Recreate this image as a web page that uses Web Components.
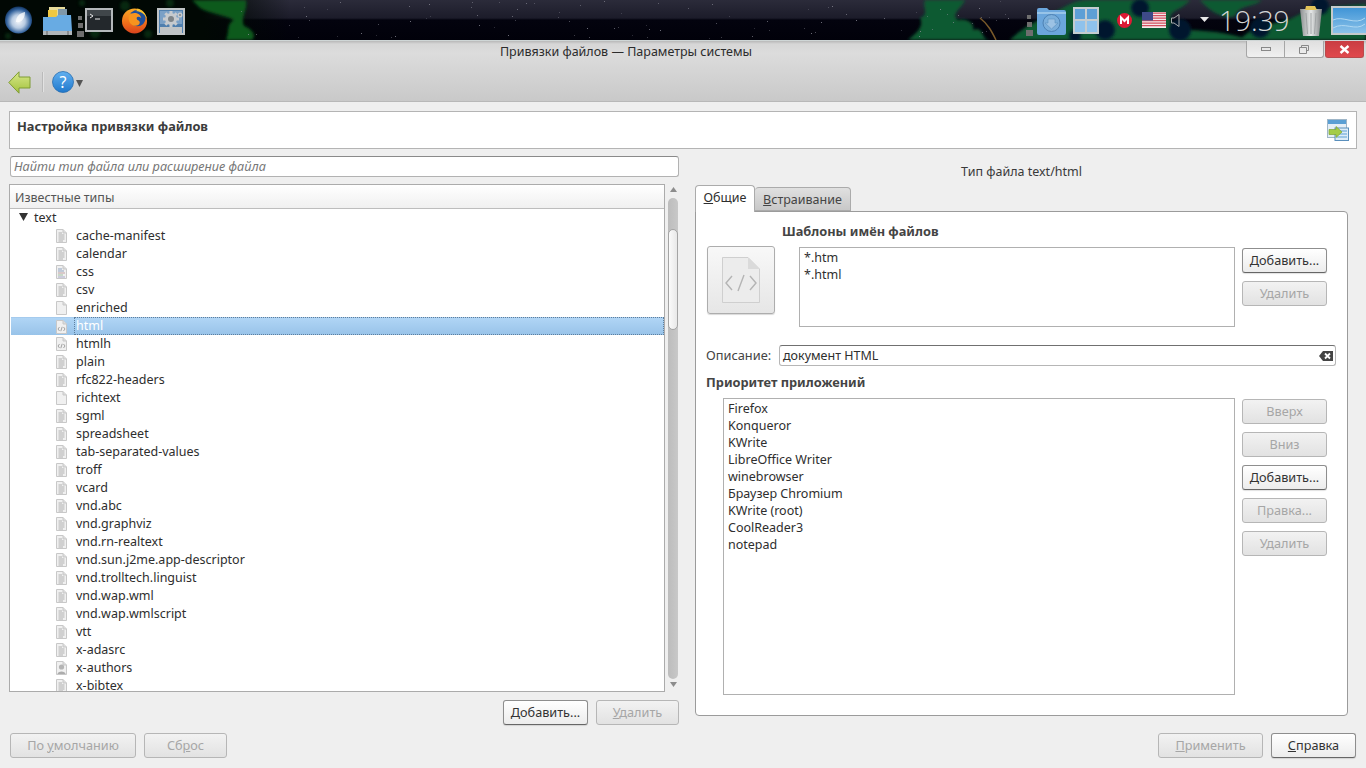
<!DOCTYPE html>
<html lang="ru">
<head>
<meta charset="utf-8">
<title>Привязки файлов</title>
<style>
    html, body { margin: 0; padding: 0; }
    body {
        width: 1366px;
        height: 768px;
        overflow: hidden;
        background: #efefef;
        font: 12.5px "Noto Sans", "Open Sans", sans-serif;
        color: #2e2e2e;
    }
</style>
</head>
<body>
<desk-panel></desk-panel>
<win-chrome title-text="Привязки файлов — Параметры системы"></win-chrome>
<kcm-header>Настройка привязки файлов</kcm-header>
<main-area></main-area>
<bottom-bar></bottom-bar>

<script>
const DOC_SHAPE = 'M1.5 .5H8L11.5 4V13.5H1.5Z';

function fileIcon(kind) {
    let inner = '';
    if (kind === 'doc') {
        inner = '<path d="M3.5 4H7M3.5 6H9.5M3.5 8H9.5M3.5 10H9.5M3.5 12H8" stroke="#b0b0b0" fill="none"/>';
    } else if (kind === 'code') {
        inner = '<path d="M4.5 7L3 9L4.5 11M8.5 7L10 9L8.5 11M7.2 6.8L5.8 11.2" stroke="#8e8e8e" fill="none" stroke-width=".8"/>';
    } else if (kind === 'css') {
        inner = '<path d="M3 4H7M3 6H9" stroke="#8fa3c0"/><path d="M3 8H10" stroke="#c0a0a0"/><path d="M3 10H8" stroke="#9fc0a0"/><path d="M3 12H10" stroke="#a8a8c8"/>';
    } else if (kind === 'person') {
        inner = '<circle cx="6.5" cy="6" r="2.6" fill="#b4b4b4"/><path d="M2.5 13C2.5 9.5 10.5 9.500 10.5 13Z" fill="#acacac"/>';
    }
    return `<svg width="13" height="14" viewBox="0 0 13 14">
        <path d="${DOC_SHAPE}" fill="#f0f0f0" stroke="#c8c8c8"/>
        <path d="M8 .5V4H11.5" fill="#dcdcdc" stroke="#c8c8c8"/>${inner}</svg>`;
}

class DeskPanel extends HTMLElement {
    constructor() {
        super();
        this.attachShadow({ mode: 'open' });
        let stars = '';
        let seed = 17;
        for (let i = 0; i < 90; i++) {
            seed = (seed * 137 + 71) % 1009;
            const x = 240 + (seed * 7) % 780;
            seed = (seed * 137 + 71) % 1009;
            const y = 1 + seed % 38;
            stars += `<rect x="${x}" y="${y}" width="1" height="1" fill="#8f8f9c" opacity="${0.3 + (seed % 5) / 9}"/>`;
        }
        const dots = `<div class="dots"><i></i><i></i><i></i></div>`;
        this.shadowRoot.innerHTML = `
            <style>
                :host {
                    display: block;
                    position: relative;
                    height: 40px;
                    border-bottom: 1px solid #cfd6d6;
                    background: linear-gradient(#2b2b3a 0, #1c1c2a 18px, #03030e 20px, #01010a 100%);
                    overflow: hidden;
                }
                .wall { position: absolute; left: 0; top: 0; }
                .bar {
                    position: relative;
                    display: flex;
                    align-items: center;
                    height: 40px;
                }
                .bar > * { flex: none; }
                .dots {
                    display: flex;
                    flex-direction: column;
                    gap: 3px;
                    align-items: center;
                    width: 8px;
                    margin-top: 10px;
                }
                .dots i { display: block; background: #6e6e6e; }
                .dots i:nth-child(1) { width: 4px; height: 4px; }
                .dots i:nth-child(2) { width: 5px; height: 5px; }
                .dots i:nth-child(3) { width: 7px; height: 6px; }
                .clock {
                    font-family: "Open Sans", sans-serif;
                    font-weight: 300;
                    font-size: 28px;
                    line-height: 36px;
                    color: #d4d6d6;
                    margin-left: 10px;
                    width: 82px;
                }
            </style>
            <svg class="wall" width="1366" height="40">
                <defs>
                    <filter id="b"><feGaussianBlur stdDeviation="1.5"/></filter>
                    <linearGradient id="fade"><stop offset=".7" stop-color="#010804"/><stop offset="1" stop-color="#010804" stop-opacity="0"/></linearGradient>
                </defs>
                <rect width="290" height="40" fill="url(#fade)"/>
                <g fill="#0c4a1c" opacity=".5" filter="url(#b)">
                    <circle cx="8" cy="36" r="3"/><circle cx="95" cy="33" r="5"/><circle cx="125" cy="6" r="5"/>
                    <circle cx="148" cy="34" r="4"/><circle cx="170" cy="3" r="4"/><circle cx="82" cy="3" r="3"/>
                </g>
                <g fill="#0a5a1e" filter="url(#b)">
                    <path d="M192 0H246C248 10 240 18 244 26C254 30 256 36 252 40H226C230 30 226 24 234 20C222 14 210 14 200 8Z"/>
                </g>
                <g fill="#0e5a33" filter="url(#b)">
                    <path d="M925 0H965C962 8 950 14 958 20C968 18 975 24 973 30C985 26 980 40 990 40H908C918 32 924 26 920 18C930 14 922 8 925 0Z"/>
                    <path d="M1010 40C1020 30 1030 24 1055 12C1070 4 1075 0 1090 0H1190C1180 12 1165 10 1172 24C1180 34 1210 26 1250 40Z"/>
                    <path d="M1200 0H1262C1252 8 1240 4 1235 16C1225 20 1210 12 1200 0Z"/>
                    <path d="M1240 40C1255 22 1280 26 1300 14C1320 6 1330 8 1366 4V40Z"/>
                </g>
                <g fill="#06122e" filter="url(#b)">
                    <circle cx="1180" cy="30" r="11"/><circle cx="1260" cy="28" r="10"/><circle cx="1320" cy="6" r="9"/>
                    <circle cx="1105" cy="30" r="10"/><circle cx="1140" cy="8" r="9"/><circle cx="1075" cy="36" r="6"/>
                </g>
                <path d="M980 18C988 24 992 32 996 40" stroke="#7a5a2a" stroke-width="1.5" fill="none"/>
                ${stars}
            </svg>
            <div class="bar">
                <svg style="margin-left:5px" width="27" height="28" viewBox="0 0 27 28">
                    <defs><radialGradient id="orb" cx=".5" cy=".55" r=".55">
                        <stop offset="0" stop-color="#f4f6fa"/><stop offset=".45" stop-color="#b8cbe2"/>
                        <stop offset=".8" stop-color="#33629c"/><stop offset="1" stop-color="#12335e"/>
                    </radialGradient></defs>
                    <circle cx="13.5" cy="14" r="13.5" fill="url(#orb)"/>
                    <path d="M11 16C11 10 15 7 20 6C20 12 17 17 11 16Z" fill="#fff" opacity=".75"/>
                </svg>
                <svg style="margin-left:11px" width="29" height="29" viewBox="0 0 29 29">
                    <path d="M6 1H22V12H6Z" fill="#e8dc9a"/><path d="M15 3H24V12H15Z" fill="#7f97a8"/><path d="M5 4H14V12H5Z" fill="#f0c842"/>
                    <path d="M0 11H13L15 9H28L29 25H0Z" fill="#68abe3"/>
                    <path d="M0 25H29V29H0Z" fill="#b0b6ba"/><path d="M4 25V29M25 25V29" stroke="#666"/>
                </svg>
                <div class="dots" style="margin-left:4px;margin-top:12px">
                    <i></i><i></i><i></i>
                </div>
                <svg style="margin-left:1px" width="28" height="24" viewBox="0 0 28 24">
                    <rect x="1" y="1" width="26" height="22" fill="#23282c" stroke="#b4b8ba" stroke-width="2"/>
                    <rect x="2" y="2" width="24" height="6" fill="#40464a"/>
                    <path d="M5 6L8 8L5 10M10 11H15" stroke="#e8e8e8" fill="none"/>
                </svg>
                <svg style="margin-left:8px" width="27" height="29" viewBox="0 0 28 29">
                    <defs><linearGradient id="fx" x1="0" y1="0" x2="0" y2="1">
                        <stop offset="0" stop-color="#f9a825"/><stop offset=".6" stop-color="#ef6c1a"/><stop offset="1" stop-color="#d9431e"/>
                    </linearGradient></defs>
                    <circle cx="14" cy="15" r="13" fill="url(#fx)"/>
                    <circle cx="17" cy="12" r="8.5" fill="#1f4f9c"/>
                    <path d="M8 9C12 5 20 6 21 12C17 9 15 12 17 14C21 15 20 20 15 20C10 20 7 15 8 9Z" fill="#f7941e"/>
                    <path d="M17 2C22 3 26 7 27 13C24 7 20 5 16 5Z" fill="#f9c22e"/>
                </svg>
                <svg style="margin-left:9px" width="28" height="29" viewBox="0 0 28 29">
                    <rect x="1" y="3" width="26" height="25" fill="#4f7fae" stroke="#c0c4c6" stroke-width="2"/>
                    <rect x="3" y="5" width="22" height="13" fill="#7aa0c6"/>
                    <path d="M3 21H25V27H3Z" fill="#c0c4c6"/>
                    <path d="M14 5V21M6 13H22M8.300 7.300L19.700 18.700M19.700 7.300L8.300 18.700" stroke="#c6cace" stroke-width="3"/>
                    <circle cx="14" cy="13" r="6" fill="#c6cace"/><circle cx="14" cy="13" r="3" fill="#7e8488"/>
                    <circle cx="23" cy="9" r="2.5" fill="#c6cace"/><circle cx="23" cy="9" r="1" fill="#7e8488"/>
                </svg>
                <div style="flex:1 1 auto"></div>
                ${dots}
                <svg style="margin-left:3px" width="30" height="29" viewBox="0 0 30 29">
                    <path d="M1 4Q1 2 3 2H11L13 4H28Q30 4 30 6V27Q30 29 28 29H3Q1 29 1 27Z" fill="#6ba6dc"/>
                    <path d="M1 6H30V8H1Z" fill="#98c4e8"/>
                    <circle cx="15.5" cy="17" r="8.5" fill="#7aaedb" stroke="#4e82b4"/>
                    <path d="M12 13H19V17H22L15.5 23L9 17H12Z" fill="#9cc2e4" stroke="#5d90c0" stroke-width=".6"/>
                </svg>
                <svg style="margin-left:7px" width="26" height="27" viewBox="0 0 26 27">
                    <rect width="26" height="27" fill="#c4ccd0"/>
                    <rect x="2" y="2" width="10" height="10" fill="#5d9fd6"/><rect x="14" y="2" width="10" height="10" fill="#5d9fd6"/>
                    <rect x="2" y="14" width="10" height="11" fill="#8fc2ec"/><rect x="14" y="14" width="10" height="11" fill="#8fc2ec"/>
                </svg>
                <svg style="margin-left:18px" width="15" height="15" viewBox="0 0 15 15">
                    <circle cx="7.5" cy="7.5" r="7.5" fill="#dd1a35"/>
                    <path d="M4 11V4.5L7.5 8L11 4.5V11" stroke="#fff" stroke-width="2" fill="none"/>
                </svg>
                <svg style="margin-left:10px" width="24" height="16" viewBox="0 0 24 16">
                    <rect width="24" height="16" fill="#f4e8ea"/>
                    <path d="M0 1.2H24M0 3.7H24M0 6.2H24M0 8.7H24M0 11.2H24M0 13.7H24" stroke="#d2505f" stroke-width="1.3"/>
                    <rect width="11" height="8.5" fill="#3d4a88"/>
                </svg>
                <svg style="margin-left:5px" width="9" height="13" viewBox="0 0 9 13">
                    <path d="M8 .5V12.5L3 9H.5V4H3Z" fill="none" stroke="#a8acac"/>
                </svg>
                <svg style="margin-left:20px" width="9" height="6" viewBox="0 0 9 6"><path d="M0 0H9L4.5 5Z" fill="#e8e8e8"/></svg>
                <div class="clock">19:39</div>
                <svg style="margin-left:-1px" width="22" height="31" viewBox="0 0 22 31">
                    <defs><linearGradient id="bin"><stop offset="0" stop-color="#8b8f90"/><stop offset=".5" stop-color="#e6e8e8"/><stop offset="1" stop-color="#7d8182"/></linearGradient></defs>
                    <path d="M0 4H22L19 31H3Z" fill="url(#bin)"/>
                    <path d="M6 1H15L17 5H5Z" fill="#e3c458"/>
                    <path d="M6 8L7.5 29M11 8V29M16 8L14.5 29" stroke="#a0a4a5"/>
                </svg>
                <svg style="margin-left:9px" width="35" height="29" viewBox="0 0 35 29">
                    <defs><linearGradient id="dsk" x1="0" y1="0" x2="0" y2="1"><stop offset="0" stop-color="#3d93d6"/><stop offset="1" stop-color="#8ec4ea"/></linearGradient></defs>
                    <rect x="1" y="1" width="35" height="27" fill="url(#dsk)" stroke="#c6cacb" stroke-width="2"/>
                    <path d="M2 14C12 9 24 20 34 12M2 22C14 15 24 26 34 18" stroke="#b0d8f2" fill="none"/>
                </svg>
            </div>
        `;
    }
}

class WinChrome extends HTMLElement {
    constructor() {
        super();
        this.attachShadow({ mode: 'open' });
        this.shadowRoot.innerHTML = `
            <style>
                :host {
                    display: block;
                    height: 60px;
                    border-bottom: 1px solid #b8b8b8;
                    background: linear-gradient(#b8b8b8 0, #d6d6d6 3px, #dcdcdc 12px, #c9c9c9 100%);
                }
                .title {
                    display: flex;
                    height: 22px;
                }
                .title span {
                    flex: 1;
                    text-align: center;
                    line-height: 22px;
                    padding-left: 6px;
                    color: #2c2c2c;
                }
                .winbtns { display: flex; padding-right: 2px; height: 17px; }
                .winbtns div {
                    height: 16px;
                    display: flex;
                    align-items: center;
                    justify-content: center;
                    border: 1px solid #a6a6a6;
                    border-top: 0;
                    background: linear-gradient(#dfdfdf, #f0f0f0);
                }
                .winbtns .min { width: 37px; border-radius: 0 0 0 3px; }
                .winbtns .max { width: 38px; border-left: 0; border-radius: 0 0 3px 0; }
                .winbtns .close {
                    width: 37px;
                    margin-left: 1px;
                    background: linear-gradient(#c93d42, #e0484c);
                    border-color: #b84a4c;
                    border-radius: 0 0 3px 3px;
                }
                .tools {
                    display: flex;
                    align-items: center;
                    height: 38px;
                    padding: 0 0 0 8px;
                }
                .sep { width: 1px; height: 20px; margin: 0 9px 0 11px; background: #bababa; box-shadow: 1px 0 #e2e2e2; }
                .help { position: relative; width: 22px; height: 22px; }
                .help span {
                    position: absolute;
                    left: 0; top: 0; width: 22px;
                    text-align: center;
                    line-height: 22px;
                    font-size: 16px;
                    color: #fff;
                }
            </style>
            <div class="title">
                <span>${this.getAttribute('title-text')}</span>
                <div class="winbtns">
                    <div class="min"><svg width="10" height="4"><rect x=".5" y=".5" width="9" height="3" fill="none" stroke="#888"/></svg></div>
                    <div class="max"><svg width="10" height="9"><path d="M2.5 2.5V.5H9.5V5.5H7.5M.5 2.5H7.5V8.5H.5Z" fill="none" stroke="#888"/></svg></div>
                    <div class="close"><svg width="11" height="9"><path d="M1.5 1L9.5 8M9.5 1L1.5 8" stroke="#fff" stroke-width="2.4"/></svg></div>
                </div>
            </div>
            <div class="tools">
                <svg width="23" height="23" viewBox="0 0 23 23">
                    <defs><linearGradient id="arr" x1="0" y1="0" x2="0" y2="1"><stop offset="0" stop-color="#d8e88a"/><stop offset="1" stop-color="#a3c23e"/></linearGradient></defs>
                    <path d="M.8 11.5L11 .8V6H22V17H11V22.2Z" fill="url(#arr)" stroke="#7f9c34"/>
                </svg>
                <div class="sep"></div>
                <div class="help">
                    <svg width="22" height="22" viewBox="0 0 22 22">
                        <defs><linearGradient id="hp" x1="0" y1="0" x2="0" y2="1"><stop offset="0" stop-color="#62b0f0"/><stop offset="1" stop-color="#1f78cc"/></linearGradient></defs>
                        <circle cx="11" cy="11" r="10.5" fill="url(#hp)" stroke="#2a6fb0" stroke-width=".8"/>
                    </svg>
                    <span>?</span>
                </div>
                <svg style="margin-left:2px;margin-top:3px" width="7" height="7" viewBox="0 0 7 7"><path d="M0 0H7L3.5 7Z" fill="#555"/></svg>
            </div>
        `;
    }
}

class KcmHeader extends HTMLElement {
    constructor() {
        super();
        this.attachShadow({ mode: 'open' });
        this.shadowRoot.innerHTML = `
            <style>
                :host {
                    display: flex;
                    align-items: center;
                    justify-content: space-between;
                    box-sizing: border-box;
                    width: 1348px;
                    height: 38px;
                    margin: 9px 0 7px 9px;
                    padding: 0 7px 0 7px;
                    background: #fff;
                    border: 1px solid #b4b4b4;
                }
                b { color: #3c3c3c; margin-top: -9px; font-size: 12.8px; }
            </style>
            <b><slot></slot></b>
            <svg width="22" height="22" viewBox="0 0 22 22">
                <rect x=".5" y=".5" width="19" height="18" fill="#e4eef6" stroke="#9fb6c8"/>
                <rect x="1" y="1" width="18" height="4" fill="#5a9fd4"/>
                <rect x="8" y="9" width="13.5" height="12.5" fill="#dcecf8" stroke="#5a8fbc"/>
                <path d="M10 12H20M10 15H20M10 18H20" stroke="#5a9fd4"/>
                <path d="M15 12L9 6.5V9.5H2V14.500H9V17.5Z" transform="translate(0 1)" fill="#a4cc48" stroke="#7da233" stroke-width=".7"/>
            </svg>
        `;
    }
}

class KdeBtn extends HTMLElement {
    constructor() {
        super();
        this.attachShadow({ mode: 'open' });
        this.shadowRoot.innerHTML = `
            <style>
                :host {
                    display: flex;
                    flex: none;
                    align-items: center;
                    justify-content: center;
                    box-sizing: border-box;
                    width: 85px;
                    height: 25px;
                    padding-bottom: 2px;
                    border: 1px solid #8e8e8e;
                    border-bottom-color: #666;
                    border-radius: 3px;
                    background: linear-gradient(#fff, #ececec);
                    box-shadow: 0 1px 1px rgba(0, 0, 0, .12);
                    color: #333;
                    font-size: 12.7px;
                    white-space: nowrap;
                }
                :host([disabled]) {
                    border-color: #b6b6b6;
                    background: linear-gradient(#f2f2f2, #e2e2e2);
                    box-shadow: none;
                    color: #a6a6a6;
                }
            </style>
            <slot></slot>
        `;
    }
}

class TypeTree extends HTMLElement {
    constructor() {
        super();
        this.attachShadow({ mode: 'open' });
        const rows = [
            ['cache-manifest', 'doc'], ['calendar', 'doc'], ['css', 'css'], ['csv', 'doc'], ['enriched', 'blank'],
            ['html', 'code'], ['htmlh', 'code'], ['plain', 'doc'], ['rfc822-headers', 'doc'], ['richtext', 'blank'],
            ['sgml', 'doc'], ['spreadsheet', 'doc'], ['tab-separated-values', 'doc'], ['troff', 'doc'], ['vcard', 'doc'],
            ['vnd.abc', 'doc'], ['vnd.graphviz', 'doc'], ['vnd.rn-realtext', 'doc'], ['vnd.sun.j2me.app-descriptor', 'doc'],
            ['vnd.trolltech.linguist', 'doc'], ['vnd.wap.wml', 'doc'], ['vnd.wap.wmlscript', 'doc'], ['vtt', 'doc'],
            ['x-adasrc', 'doc'], ['x-authors', 'person'], ['x-bibtex', 'doc']
        ];
        const html = rows.map(([name, kind]) => `
            <div class="row${name === 'html' ? ' sel' : ''}">
                <span class="ic">${fileIcon(kind)}</span><span class="nm">${name}</span>
            </div>`).join('');
        this.shadowRoot.innerHTML = `
            <style>
                :host {
                    display: flex;
                    height: 508px;
                    margin-top: 7px;
                }
                .box {
                    box-sizing: border-box;
                    width: 657px;
                    margin-left: -1px;
                    border: 1px solid #ababab;
                    background: #fff;
                    overflow: hidden;
                }
                .head {
                    height: 23px;
                    line-height: 25px;
                    padding-left: 5px;
                    border-bottom: 1px solid #bdbdbd;
                    background: linear-gradient(#fff, #f0f0f0);
                    color: #555;
                }
                .row { display: flex; align-items: center; height: 18px; color: #2e2e2e; }
                .top { padding: 0 0 2px 9px; box-sizing: border-box; }
                .top svg { margin-right: 6px; }
                .ic { display: flex; width: 13px; margin-left: 45px; margin-right: 8px; }
                .nm { flex: 1; height: 18px; line-height: 18px; }
                .sel {
                    margin-left: 1px;
                    background: linear-gradient(#b0d5f5, #98c3e9);
                    border-top: 1px solid #a5cbee;
                    box-sizing: border-box;
                }
                .sel .ic { margin-left: 44px; margin-right: 6px; }
                .sel .nm {
                    color: #fff;
                    padding-left: 1px;
                    height: 16px;
                    line-height: 16px;
                    margin-top: -1px;
                    border: 1px dotted #5d7f9e;
                }
                .scroll {
                    position: relative;
                    width: 12px;
                    margin-left: 2px;
                    display: flex;
                    flex-direction: column;
                    align-items: center;
                    padding-top: 3px;
                    box-sizing: border-box;
                }
                .trough {
                    width: 10px;
                    margin-top: 6px;
                    height: 481px;
                    border-radius: 5px;
                    background: linear-gradient(90deg, #bcbcbc, #c8c8c8);
                    padding-top: 31px;
                    box-sizing: border-box;
                }
                .thumb {
                    height: 101px;
                    box-sizing: border-box;
                    border: 1px solid #a4a4a4;
                    border-radius: 5px;
                    background: linear-gradient(90deg, #fafafa, #e8e8e8);
                }
            </style>
            <div class="box">
                <div class="head">Известные типы</div>
                <div class="row top">
                    <svg width="9" height="8" viewBox="0 0 9 8"><path d="M0 0H9L4.5 8Z" fill="#333"/></svg>text
                </div>
                ${html}
            </div>
            <div class="scroll">
                <svg width="7" height="5" viewBox="0 0 7 5"><path d="M0 5H7L3.500 0Z" fill="#8c8c8c"/></svg>
                <div class="trough"><div class="thumb"></div></div>
                <svg style="margin-top:3px" width="7" height="5" viewBox="0 0 7 5"><path d="M0 0H7L3.500 5Z" fill="#8c8c8c"/></svg>
            </div>
        `;
    }
}

class ItemList extends HTMLElement {
    constructor() {
        super();
        this.attachShadow({ mode: 'open' });
        this.shadowRoot.innerHTML = `
            <style>
                :host {
                    display: block;
                    box-sizing: border-box;
                    padding: 1px 4px;
                    border: 1px solid #b0b0b0;
                    background: #fff;
                    line-height: 17px;
                    color: #2e2e2e;
                }
                ::slotted(div) { height: 17px; }
            </style>
            <slot></slot>
        `;
    }
}

class MimeDetails extends HTMLElement {
    constructor() {
        super();
        this.attachShadow({ mode: 'open' });
        this.shadowRoot.innerHTML = `
            <style>
                :host {
                    display: block;
                    width: 653px;
                }
                .caption { height: 29px; line-height: 31px; text-align: center; color: #3a3a3a; }
                .tabs { display: flex; align-items: flex-end; height: 27px; position: relative; z-index: 1; }
                .tab {
                    box-sizing: border-box;
                    border: 1px solid #ababab;
                    border-radius: 4px 4px 0 0;
                    text-align: center;
                }
                .tab.on {
                    width: 60px;
                    height: 27px;
                    line-height: 24px;
                    background: #fff;
                    border-bottom: 0;
                }
                .tab.off {
                    width: 96px;
                    height: 24px;
                    line-height: 23px;
                    margin-bottom: 1px;
                    background: linear-gradient(#e0e0e0, #c8c8c8);
                    border-left: 0;
                    color: #444;
                }
                .panel {
                    box-sizing: border-box;
                    height: 505px;
                    margin-top: -1px;
                    padding: 12px 11px 0 10px;
                    background: #fff;
                    border: 1px solid #9b9b9b;
                    border-radius: 0 4px 4px 4px;
                }
                .top { display: flex; }
                .bigicon {
                    box-sizing: border-box;
                    width: 68px;
                    height: 68px;
                    margin: 22px 7px 0 1px;
                    display: flex;
                    align-items: center;
                    justify-content: center;
                    border: 1px solid #adadad;
                    border-radius: 3px;
                    background: linear-gradient(#f8f8f8, #e6e6e6);
                    box-shadow: 0 1px 1px rgba(0, 0, 0, .15);
                }
                .sect { font-weight: bold; font-size: 12.8px; color: #444; line-height: 15px; height: 14px; }
                .patterns { display: flex; gap: 7px; margin: 9px 0 0 17px; }
                .col { display: flex; flex-direction: column; gap: 8px; margin-top: 1px; }
                .desc { display: flex; align-items: center; margin-top: 18px; height: 21px; }
                .desc label { width: 73px; color: #444; font-size: 12.8px; margin-top: -2px; }
                .field {
                    box-sizing: border-box;
                    width: 557px;
                    height: 21px;
                    display: flex;
                    align-items: center;
                    justify-content: space-between;
                    padding: 0 2px 0 3px;
                    border: 1px solid #b6b6b6;
                    border-top-color: #707070;
                    border-radius: 3px;
                }
                .apps { display: flex; gap: 7px; margin: 9px 0 0 17px; }
            </style>
            <div class="caption">Тип файла text/html</div>
            <div class="tabs">
                <div class="tab on"><u>О</u>бщие</div>
                <div class="tab off"><u>В</u>страивание</div>
            </div>
            <div class="panel">
                <div class="top">
                    <div class="bigicon">
                        <svg width="38" height="46" viewBox="0 0 38 46">
                            <path d="M.5 .5H26L37.500 12V45.500H.5Z" fill="#ececec" stroke="#cfcfcf"/>
                            <path d="M26 .5V12H37.500Z" fill="#dadada"/>
                            <path d="M10 19L4 26L10 33M28 19L34 26L28 33M22 18L16 34" stroke="#b4b4b4" stroke-width="1.4" fill="none"/>
                        </svg>
                    </div>
                    <div>
                        <div class="sect">Шаблоны имён файлов</div>
                        <div class="patterns">
                            <item-list style="width:436px;height:80px"><div>*.htm</div><div>*.html</div></item-list>
                            <div class="col">
                                <kde-btn>Добавить...</kde-btn>
                                <kde-btn disabled>Удалить</kde-btn>
                            </div>
                        </div>
                    </div>
                </div>
                <div class="desc">
                    <label>Описание:</label>
                    <div class="field">
                        <span>документ HTML</span>
                        <svg width="14" height="10" viewBox="0 0 14 10">
                            <path d="M4 0H14V10H4L0 5Z" fill="#444"/>
                            <path d="M6 2.500L11 7.500M11 2.500L6 7.500" stroke="#fff" stroke-width="1.800"/>
                        </svg>
                    </div>
                </div>
                <div class="sect" style="margin-top:9px">Приоритет приложений</div>
                <div class="apps">
                    <item-list style="width:512px;height:297px">
                        <div>Firefox</div><div>Konqueror</div><div>KWrite</div><div>LibreOffice Writer</div>
                        <div>winebrowser</div><div>Браузер Chromium</div><div>KWrite (root)</div>
                        <div>CoolReader3</div><div>notepad</div>
                    </item-list>
                    <div class="col">
                        <kde-btn disabled>Вверх</kde-btn>
                        <kde-btn disabled>Вниз</kde-btn>
                        <kde-btn>Добавить...</kde-btn>
                        <kde-btn disabled>Правка...</kde-btn>
                        <kde-btn disabled>Удалить</kde-btn>
                    </div>
                </div>
            </div>
        `;
    }
}

class MainArea extends HTMLElement {
    constructor() {
        super();
        this.attachShadow({ mode: 'open' });
        this.shadowRoot.innerHTML = `
            <style>
                :host {
                    display: grid;
                    grid-template-columns: 669px 653px;
                    column-gap: 16px;
                    padding-left: 10px;
                    height: 577px;
                    align-content: start;
                }
                .search {
                    box-sizing: border-box;
                    height: 21px;
                    line-height: 18px;
                    padding-left: 3px;
                    border: 1px solid #b2b2b2;
                    border-top-color: #8a8a8a;
                    border-radius: 3px;
                    background: #fff;
                    color: #777;
                    font-style: italic;
                    font-size: 12.7px;
                }
                .btns { display: flex; justify-content: flex-end; gap: 8px; margin-top: 8px; }
            </style>
            <div>
                <div class="search">Найти тип файла или расширение файла</div>
                <type-tree></type-tree>
                <div class="btns">
                    <kde-btn>Добавить...</kde-btn>
                    <kde-btn disabled style="width:83px"><span><u>У</u>далить</span></kde-btn>
                </div>
            </div>
            <mime-details></mime-details>
        `;
    }
}

class BottomBar extends HTMLElement {
    constructor() {
        super();
        this.attachShadow({ mode: 'open' });
        this.shadowRoot.innerHTML = `
            <style>
                :host {
                    display: flex;
                    gap: 8px;
                    padding: 0 10px;
                }
                .gap { flex: 1; }
            </style>
            <kde-btn disabled style="width:126px"><span>По <u>у</u>молчанию</span></kde-btn>
            <kde-btn disabled style="width:83px"><span>Сб<u>р</u>ос</span></kde-btn>
            <div class="gap"></div>
            <kde-btn disabled style="width:105px"><span><u>П</u>рименить</span></kde-btn>
            <kde-btn><span><u>С</u>правка</span></kde-btn>
        `;
    }
}

customElements.define('desk-panel', DeskPanel);
customElements.define('win-chrome', WinChrome);
customElements.define('kcm-header', KcmHeader);
customElements.define('kde-btn', KdeBtn);
customElements.define('type-tree', TypeTree);
customElements.define('item-list', ItemList);
customElements.define('mime-details', MimeDetails);
customElements.define('main-area', MainArea);
customElements.define('bottom-bar', BottomBar);
</script>
</body>
</html>
